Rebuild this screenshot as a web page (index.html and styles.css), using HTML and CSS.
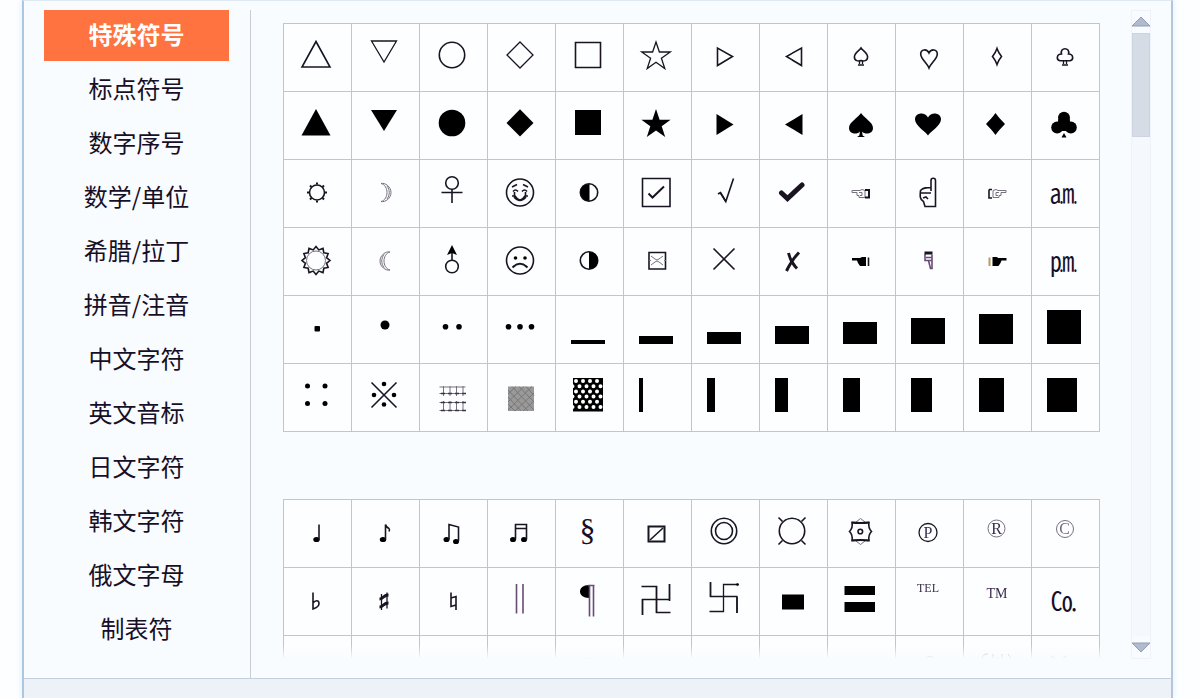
FILE: index.html
```
<!DOCTYPE html>
<html lang="zh-CN">

<head>
  <meta charset="UTF-8">
  <meta name="viewport" content="width=device-width, initial-scale=1.0">
  <title>特殊符号</title>
  <link rel="stylesheet" href="styles.css">
</head>

<body>
  <div class="window">
    <div class="panel">
      <!-- 左侧分类 -->
      <nav class="menu">
        <a class="active" href="#">特殊符号</a>
        <a href="#">标点符号</a>
        <a href="#">数字序号</a>
        <a href="#">数学/单位</a>
        <a href="#">希腊/拉丁</a>
        <a href="#">拼音/注音</a>
        <a href="#">中文字符</a>
        <a href="#">英文音标</a>
        <a href="#">日文字符</a>
        <a href="#">韩文字符</a>
        <a href="#">俄文字母</a>
        <a href="#">制表符</a>
      </nav>

      <!-- 右侧符号表 -->
      <div class="content">
        <div class="symbols">
          <div class="grid">
            <button><svg viewBox="0 0 67 67"><path d="M32 17.5L46 43H18z"/></svg></button>
            <button><svg viewBox="0 0 67 67"><path class="thin" d="M19.5 17h25L32 38z"/></svg></button>
            <button><svg viewBox="0 0 67 67"><circle cx="32" cy="31" r="12.7"/></svg></button>
            <button><svg viewBox="0 0 67 67"><path class="thin" d="M32 18l13 13-13 13-13-13z"/></svg></button>
            <button><svg viewBox="0 0 67 67"><path d="M19.5 18.5h25v25h-25z"/></svg></button>
            <button><svg viewBox="0 0 67 67"><path class="thin" d="M32 18l3.4 10h10.9l-8.9 6.3 3.4 10.2L32 38.2l-8.8 6.3 3.4-10.2-8.9-6.3h10.9z"/></svg></button>
            <button><svg viewBox="0 0 67 67"><path d="M25.5 24v17.5l15-9z"/></svg></button>
            <button><svg viewBox="0 0 67 67"><path d="M41.5 24v17.5l-15-9z"/></svg></button>
            <button><svg viewBox="0 0 67 67"><path d="M33 24c-2 3-6.600 5-6.600 9 0 4 4 4.500 6.600 3.500 2.600 1 6.600.5 6.600-3.500 0-4-4.600-6-6.600-9z"/><path class="thin" d="M31.500 37v3M34.500 37v3M30 41h6"/></svg></button>
            <button><svg viewBox="0 0 67 67"><path d="M33 44c-2-5-8.300-9-8.300-14 0-5 6.300-5.500 8.300-1 2-4.500 8.300-4 8.300 1 0 5-6.300 9-8.300 14z"/></svg></button>
            <button><svg viewBox="0 0 67 67"><path d="M33 24.500c1 3 2.500 5.500 4.500 8-2 2.500-3.500 5-4.500 8-1-3-2.500-5.500-4.500-8 2-2.500 3.500-5 4.500-8z"/></svg></button>
            <button><svg viewBox="0 0 67 67"><path d="M29.500 30c-2-7 9-7 7 0 5 0 5.500 6 1.500 6.700H28c-4-.7-3.500-6.700 1.500-6.700z"/><path class="thin" d="M31.500 37v3M34.500 37v3M30 41h6"/></svg></button>

            <button><svg viewBox="0 0 67 67"><path class="fill" d="M32 17l14.500 26.500h-29z"/></svg></button>
            <button><svg viewBox="0 0 67 67"><path class="fill" d="M19 18h26L32 39z"/></svg></button>
            <button><svg viewBox="0 0 67 67"><circle class="fill" cx="32" cy="31" r="13.3"/></svg></button>
            <button><svg viewBox="0 0 67 67"><path class="fill" d="M32 17.3L45.500 31 32 44.500 18.500 31z"/></svg></button>
            <button><svg viewBox="0 0 67 67"><path class="fill" d="M19 18h26v25H19z"/></svg></button>
            <button><svg viewBox="0 0 67 67"><path class="fill" d="M32 17l3.600 10.800h11L37.700 34.300l3.500 10.700L32 38.500 22.800 45l3.500-10.700-8.900-6.500h11z"/></svg></button>
            <button><svg viewBox="0 0 67 67"><path class="fill" d="M24.500 22v21l17-10.500z"/></svg></button>
            <button><svg viewBox="0 0 67 67"><path class="fill" d="M42.500 22v21l-17.500-10.500z"/></svg></button>
            <button><svg viewBox="0 0 67 67"><path class="fill" d="M33 21c3 5 12 9 12 15 0 6-8 7-11 3.500l.7 4 2.300 1.500h-8l2.300-1.500.7-4C29 43 21 42 21 36c0-6 9-10 12-15z"/></svg></button>
            <button><svg viewBox="0 0 67 67"><path class="fill" d="M32 43.500c-2-3.500-13-10-13-16 0-7 10-8 13-2 3-6 13-5 13 2 0 6-11 12.500-13 16z"/></svg></button>
            <button><svg viewBox="0 0 67 67"><path class="fill" d="M31.500 21c3 4 6 7.500 9.500 11-3.500 3.500-6.500 7-9.500 11-3-4-6-7.500-9.500-11 3.500-3.500 6.500-7 9.500-11z"/></svg></button>
            <button><svg viewBox="0 0 67 67"><circle class="fill" cx="32" cy="25.7" r="6"/><circle class="fill" cx="25.2" cy="35.5" r="6"/><circle class="fill" cx="38.8" cy="35.5" r="6"/><path class="fill" d="M26.500 27h11l3 12h-17zM32 41l2.500 4.500h-5z"/></svg></button>

            <button><svg viewBox="0 0 67 67"><circle cx="33" cy="32.5" r="7.5"/><path class="bold" d="M33 22.500v2M33 40.500v2M23 32.500h2M41 32.500h2M26 25.500l1.500 1.500M38.500 38l1.500 1.500M40 25.500L38.500 27M27.500 38L26 39.500"/></svg></button>
            <button><svg viewBox="0 0 67 67"><path class="grey" d="M29 23.500c4-1 10 3 10 9s-6 10-10 9c8-2 8-16 0-18z"/><path class="grey" d="M35 26c3 4 3 9 0 13"/></svg></button>
            <button><svg viewBox="0 0 67 67"><circle cx="32" cy="23" r="6.3"/><path d="M21.500 32.500h21M32 29.500V43"/></svg></button>
            <button><svg viewBox="0 0 67 67"><circle cx="32" cy="32.5" r="13.5"/><path d="M24 27l5-2.500M40 27l-5-2.500M25 31.500q2.500-3 5 0M34 31.500q2.500-3 5 0M24 36h3q5 8 10 0h3M26 37q6 7 12 0M26.500 32v4M37.500 32v4"/></svg></button>
            <button><svg viewBox="0 0 67 67"><circle cx="33" cy="32.5" r="8.7"/><path class="fill" d="M33.500 24v17c-12 0-12-17 0-17z"/></svg></button>
            <button><svg viewBox="0 0 67 67"><path d="M18.500 18.500h27.500v28h-27.500z"/><path class="bold" d="M24.500 33.500l4 4 11.500-11"/></svg></button>
            <button><svg viewBox="0 0 67 67"><path d="M26 34l2.500-1.500 5.300 9 7.700-23"/><path d="M28.500 33l5 8"/></svg></button>
            <button><svg viewBox="0 0 67 67"><path class="heavy" d="M21.500 33l6 5.500L42 25"/></svg></button>
            <button><svg viewBox="0 0 67 67"><path class="grey" d="M24 30.500h8l2-1 3 1v7h-6v-2h-2v-3h-5zM31 32.500h3v3h-2"/><path class="bold" d="M37 30h4v7.500h-4"/></svg></button>
            <button><svg viewBox="0 0 67 67"><path d="M35 31V20.500c0-3 4.500-3 4.500 0v26H29l-1.500-5c-4-2-3.500-6-3-11 3-3 6-3 10.500-3M25 33h10M27 38l3-1 2 2"/></svg></button>
            <button><svg viewBox="0 0 67 67"><path class="grey" d="M42 30.500h-8l-2-1-3 1v7h6v-2h2v-3h5zM35 32.500h-3v3h2"/><path d="M25 29.500v8.500h3M25 29.500h3"/></svg></button>
            <button class="word">㏂</button>

            <button><svg viewBox="0 0 67 67"><circle class="grey" cx="32" cy="32.5" r="9.5"/><path d="M46 32.500L42.600 35.300 44.100 39.500 39.800 40.300 39 44.600 34.800 43.100 32 46.500 29.200 43.100 25 44.600 24.200 40.300 19.900 39.500 21.400 35.300 18 32.500 21.400 29.700 19.900 25.500 24.200 24.700 25 20.400 29.200 21.900 32 18.500 34.800 21.900 39 20.400 39.800 24.700 44.100 25.500 42.600 29.700z"/></svg></button>
            <button><svg viewBox="0 0 67 67"><path class="grey" d="M38 24c-4-1-10 3-10 9s6 10 10 9c-8-2-8-16 0-18z"/><path class="grey" d="M32 26.500c-3 4-3 9 0 13"/></svg></button>
            <button><svg viewBox="0 0 67 67"><circle cx="32" cy="38.5" r="6.3"/><path d="M32 32v-8"/><path class="fill" d="M32 17l5 10-5-2-5 2z"/></svg></button>
            <button><svg viewBox="0 0 67 67"><circle cx="32" cy="32.5" r="13.5"/><circle class="fill" cx="27.5" cy="30" r="1.8"/><circle class="fill" cx="37" cy="30" r="1.8"/><path class="bold" d="M24.500 39.500q7.500-7.500 15 0"/></svg></button>
            <button><svg viewBox="0 0 67 67"><circle cx="33" cy="32.5" r="8.7"/><path class="fill" d="M33 24v17c12 0 12-17 0-17z"/></svg></button>
            <button><svg viewBox="0 0 67 67"><path d="M25 24.500h16.500v16.500H25z"/><path class="grey" d="M27 28l4 3q2 2 4 0l4-3M27 37l4-3q2-2 4 0l4 3M25 32.500h2M40 32.500h2"/></svg></button>
            <button><svg viewBox="0 0 67 67"><path d="M21.500 20.500l21 21M42.500 20.500l-21 21"/></svg></button>
            <button><svg viewBox="0 0 67 67"><path class="strong" d="M39 24.500q-7 7-12.500 18.500M28.500 25q2 9 8.500 15.500"/></svg></button>
            <button><svg viewBox="0 0 67 67"><path class="fill" d="M24 30h8l2-1h4v9h-6l-2-3-1-2.500h-5z"/><path d="M40.500 29.500v8.500"/></svg></button>
            <button><svg viewBox="0 0 67 67"><path class="plum" d="M29 26v6.500h3.500l2 8h1.500v-14M30 29.500h6M32 32.500h4"/><path class="strong" d="M28.500 25h8"/></svg></button>
            <button><svg viewBox="0 0 67 67"><path class="fill" d="M42.500 30h-8l-2-1h-4v9h6l2-3 1-2.500h5z"/><path class="gold" d="M25.500 29.500v8.500"/></svg></button>
            <button class="word">㏘</button>

            <button><svg viewBox="0 0 67 67"><rect class="fill" x="30.5" y="30" width="5.5" height="5.5" rx="1"/></svg></button>
            <button><svg viewBox="0 0 67 67"><circle class="fill" cx="33" cy="29" r="4.5"/></svg></button>
            <button><svg viewBox="0 0 67 67"><circle class="fill" cx="25.5" cy="30.7" r="2.8"/><circle class="fill" cx="39" cy="30.7" r="2.8"/></svg></button>
            <button><svg viewBox="0 0 67 67"><circle class="fill" cx="20.5" cy="30.7" r="2.8"/><circle class="fill" cx="32" cy="30.7" r="2.8"/><circle class="fill" cx="43.5" cy="30.7" r="2.8"/></svg></button>
            <button><svg viewBox="0 0 67 67"><path class="fill" d="M15 44h34v4H15z"/></svg></button>
            <button><svg viewBox="0 0 67 67"><path class="fill" d="M15 40h34v8H15z"/></svg></button>
            <button><svg viewBox="0 0 67 67"><path class="fill" d="M15 36h34v12H15z"/></svg></button>
            <button><svg viewBox="0 0 67 67"><path class="fill" d="M15 30h34v18H15z"/></svg></button>
            <button><svg viewBox="0 0 67 67"><path class="fill" d="M15 26h34v22H15z"/></svg></button>
            <button><svg viewBox="0 0 67 67"><path class="fill" d="M15 22h34v26H15z"/></svg></button>
            <button><svg viewBox="0 0 67 67"><path class="fill" d="M15 18h34v30H15z"/></svg></button>
            <button><svg viewBox="0 0 67 67"><path class="fill" d="M15 14h34v34H15z"/></svg></button>

            <button><svg viewBox="0 0 67 67"><circle class="fill" cx="23.5" cy="22" r="2.5"/><circle class="fill" cx="41" cy="22" r="2.5"/><circle class="fill" cx="23.5" cy="39.5" r="2.5"/><circle class="fill" cx="41" cy="39.5" r="2.5"/></svg></button>
            <button><svg viewBox="0 0 67 67"><path d="M19.500 18.500l25 25M44.500 18.500l-25 25"/><circle class="fill" cx="32" cy="20" r="2.3"/><circle class="fill" cx="22" cy="31" r="2.3"/><circle class="fill" cx="42" cy="31" r="2.3"/><circle class="fill" cx="32" cy="40.5" r="2.3"/></svg></button>
            <button><svg viewBox="0 0 67 67"><path class="grey" d="M19.500 23h26M19.500 29.500h26M19.500 38.500h26M19.500 46.500h26M23.500 22v10M30 22v10M36.500 22v10M43 22v10M23.500 37v10M30 37v10M36.500 37v10M43 37v10"/><path class="dash" d="M21 29.500h25M21 38.500h25M21 46.500h25"/></svg></button>
            <button><svg viewBox="0 0 67 67"><path class="shade" d="M20 22.500h26V47H20z"/><path class="mesh" d="M20 26l20 21M20 33l13 14M20 40l7 7M24 22.500L46 46M31 22.500L46 38M38 22.500l8 9M20 30l8-7.500M20 38l16-15.500M20 46l24-23.500M27 47l19-18M35 47l11-10"/></svg></button>
            <button><svg viewBox="0 0 67 67"><path class="fill" d="M17 14h30v33.500H17z"/><path class="holes" d="M20 17h28M16.500 22.300h31M20 27.500h28M16.500 32.500h31M20 37.700h28M16.500 43h31"/></svg></button>
            <button><svg viewBox="0 0 67 67"><path class="fill" d="M15 14h4v34h-4z"/></svg></button>
            <button><svg viewBox="0 0 67 67"><path class="fill" d="M15 14h8v34h-8z"/></svg></button>
            <button><svg viewBox="0 0 67 67"><path class="fill" d="M15 14h13v34H15z"/></svg></button>
            <button><svg viewBox="0 0 67 67"><path class="fill" d="M15 14h17v34H15z"/></svg></button>
            <button><svg viewBox="0 0 67 67"><path class="fill" d="M15 14h21v34H15z"/></svg></button>
            <button><svg viewBox="0 0 67 67"><path class="fill" d="M15 14h25v34H15z"/></svg></button>
            <button><svg viewBox="0 0 67 67"><path class="fill" d="M15 14h30v34H15z"/></svg></button>
          </div>

          <div class="grid">
            <button><svg viewBox="0 0 67 67"><ellipse class="fill" cx="32.5" cy="39.5" rx="3.2" ry="2.6"/><path d="M35 39.500v-15"/></svg></button>
            <button><svg viewBox="0 0 67 67"><ellipse class="fill" cx="31" cy="39.5" rx="3.2" ry="2.6"/><path d="M33.500 39.500v-15q1 3 3.500 4 1 1 0 3"/></svg></button>
            <button><svg viewBox="0 0 67 67"><ellipse class="fill" cx="26.5" cy="39.5" rx="3" ry="2.6"/><ellipse class="fill" cx="36" cy="41.5" rx="3" ry="2.6"/><path d="M29 39.500v-15l9.500 2.500v14"/></svg></button>
            <button><svg viewBox="0 0 67 67"><ellipse class="fill" cx="25" cy="39.5" rx="3" ry="2.6"/><ellipse class="fill" cx="36" cy="39.5" rx="3" ry="2.6"/><path d="M27.500 39.500v-15h11v15M27.500 28.500h11"/></svg></button>
            <button class="serif">§</button>
            <button><svg viewBox="0 0 67 67"><path class="bold" d="M24.500 26.500h16v15h-16z"/><path d="M26 40l13-12"/></svg></button>
            <button><svg viewBox="0 0 67 67"><circle cx="32" cy="31" r="12.7"/><circle cx="32" cy="31" r="8.5"/></svg></button>
            <button><svg viewBox="0 0 67 67"><circle cx="32" cy="31" r="12.7"/><path d="M18.500 17.500l4 4M45.500 17.500l-4 4M18.500 44.500l4-4M45.500 44.500l-4-4"/></svg></button>
            <button><svg viewBox="0 0 67 67"><path class="grey" d="M28 22l4.500-3.500L37 22M28 41l4.500 3.500L37 41"/><path d="M24 22.500q8.500 1 17 0-1 5.500 2.500 9-3.500 3.500-2.500 9-8.500-1-17 0 1-5.500-2.500-9 3.500-3.500 2.500-9z"/><path class="bold" d="M24 22.500q8.500 1 17 0M24 40.500q8.500-1 17 0"/><circle cx="32.3" cy="31.5" r="2.3"/></svg></button>
            <button><svg viewBox="0 0 67 67"><circle class="thin" cx="32" cy="32.5" r="9"/><text x="32" y="38">P</text></svg></button>
            <button><svg viewBox="0 0 67 67"><circle class="grey" cx="32.5" cy="28.5" r="8.5"/><text x="32.5" y="34">R</text></svg></button>
            <button><svg viewBox="0 0 67 67"><circle class="grey" cx="33" cy="29" r="8.5"/><text class="pale" x="32.5" y="34">C</text></svg></button>

            <button><svg viewBox="0 0 67 67"><path d="M29 24.500v16.500q6-2 6-5.500c0-4-4-3-6-.5"/></svg></button>
            <button><svg viewBox="0 0 67 67"><path class="thin" d="M29.500 26v16M35 24.500v16"/><path class="strong" d="M27.500 31q2 0 4-2t5-2M27.500 39q2 0 4-2t5-2"/></svg></button>
            <button><svg viewBox="0 0 67 67"><path d="M31 24.500V38.500l5-1.500M36 42V28.500l-5 1.500"/></svg></button>
            <button><svg viewBox="0 0 67 67"><path class="plum" d="M28.500 16v29.500M35 16v29.500"/></svg></button>
            <button><svg viewBox="0 0 67 67"><path class="fill" d="M33 17v13c-12 0-12-13 0-13z"/><path class="plum" d="M33.500 17v31.500M37.500 17v31.500M32 17.500h6.500"/></svg></button>
            <button><svg viewBox="0 0 67 67"><path class="thin" d="M17.500 18.500h15v26h14M18.500 47V31.500h27V16"/><path d="M18.500 47V31M45.500 16v17M32.500 18v27"/></svg></button>
            <button><svg viewBox="0 0 67 67"><path class="thin" d="M18.500 14.500v14h26.500V45M17.500 43.500h14v-27h15"/><path d="M18.500 14v15M45 29v16"/><circle class="fill" cx="45.5" cy="16.5" r="1.3"/></svg></button>
            <button><svg viewBox="0 0 67 67"><path class="fill" d="M22 26.500h22v15H22z"/></svg></button>
            <button><svg viewBox="0 0 67 67"><path class="fill" d="M16.500 18H47v9H16.500zM16.500 34H47v10H16.500z"/></svg></button>
            <button><svg viewBox="0 0 67 67"><text class="tel" x="32" y="24">TEL</text></svg></button>
            <button><svg viewBox="0 0 67 67"><text class="tm" x="33" y="30">TM</text></svg></button>
            <button class="word">㏇</button>

            <button></button>
            <button></button>
            <button></button>
            <button></button>
            <button><svg viewBox="0 0 67 67"><path class="faint" d="M29 23q4-2 8 0"/></svg></button>
            <button></button>
            <button></button>
            <button></button>
            <button></button>
            <button><svg viewBox="0 0 67 67"><path class="faint" d="M29 23q5-5 10 0"/></svg></button>
            <button><svg viewBox="0 0 67 67"><path class="faint" d="M18 23q0-5 6-5M29 18v5M38 18v5M44 18l3 5M32 23l3-2"/></svg></button>
            <button><svg viewBox="0 0 67 67"><path class="faint" d="M19 20l5 3M31 22l3-2"/></svg></button>
          </div>
        </div>

        <div class="scrollbar">
          <button class="arrow" aria-label="向上"><svg viewBox="0 0 20 10"><path d="M10 0l9 9H1z"/></svg></button>
          <div class="track">
            <div class="thumb"></div>
          </div>
          <button class="arrow" aria-label="向下"><svg viewBox="0 0 20 10"><path d="M10 10L1 1h18z"/></svg></button>
        </div>
      </div>
    </div>
    <div class="bottom"></div>
  </div>
</body>

</html>
```
FILE: styles.css
```
* {
  box-sizing: border-box;
}

body {
  margin: 0;
  padding: 0 27px 0 22px;
  background-color: #fcfeff;
  font-family: "Noto Sans CJK SC", "Noto Sans", sans-serif;
  color: #170f26;
}

.window {
  display: flex;
  flex-direction: column;
  height: 100vh;
  border-left: 2px solid #abc7e1;
  border-right: 2px solid #b4c5dd;
  border-top: 1px solid #e0eaf3;
  background-color: #f9fcff;
  box-shadow: 0 0 6px #e0edf8;
}

.panel {
  flex: 1;
  min-height: 0;
  display: flex;
  padding-top: 9px;
}

.bottom {
  height: 20px;
  border-top: 1px solid #c5cedb;
  background-color: #edf2f9;
}

/* 左侧菜单 */
.menu {
  display: flex;
  flex-direction: column;
  gap: 3px;
  width: 227px;
  padding: 0 21px 0 20px;
  border-right: 1px solid #c8ccd5;
}

.menu a {
  height: 51px;
  line-height: 48px;
  font-size: 24px;
  text-align: center;
  text-decoration: none;
  color: #170f26;
}

.menu a.active {
  background-color: #ff7340;
  color: #fff;
  font-weight: bold;
}

.content {
  flex: 1;
  display: flex;
  gap: 31px;
  padding: 0 20px 19px 32px;
}

.symbols {
  flex: 1;
  overflow: hidden;
  padding-top: 13px;
  -webkit-mask-image: linear-gradient(to top, transparent, #000 14px);
  mask-image: linear-gradient(to top, transparent, #000 14px);
}

/* 符号表格 */
.grid {
  display: grid;
  grid-template-columns: repeat(12, 1fr);
  grid-auto-rows: 68px;
  margin-bottom: 67px;
  border-top: 1px solid #bec6d2;
  border-left: 1px solid #bec6d2;
}

.grid button {
  display: flex;
  align-items: center;
  justify-content: center;
  min-width: 0;
  padding: 0;
  border: none;
  border-right: 1px solid #bec6d2;
  border-bottom: 1px solid #bec6d2;
  background-color: #fdfeff;
  color: #170f26;
  font-family: inherit;
  cursor: pointer;
}

.grid button:hover {
  background-color: #eef5fc;
}

.grid svg {
  flex: none;
  width: 67px;
  height: 67px;
  fill: none;
  stroke: #1a1422;
  stroke-width: 1.6;
}

.grid .word {
  padding: 0 4px 4px 0;
  font-size: 26px;
}

.grid .serif {
  padding: 0 4px 6px 0;
  font-family: "Liberation Serif", serif;
  font-size: 32px;
}

.grid .thin {
  stroke-width: 1.3;
}

.grid .bold {
  stroke-width: 2;
}

.grid .strong {
  stroke-width: 3;
}

.grid .heavy {
  stroke-width: 5;
  stroke-linecap: round;
}

.grid .fill {
  fill: #000;
  stroke: none;
}

.grid .grey {
  stroke: #77717f;
  stroke-width: 1;
}

.grid .plum {
  stroke: #694b76;
}

.grid .gold {
  stroke: #bd9860;
  stroke-width: 2;
}

.grid .faint {
  stroke: #999;
  stroke-width: 1;
}

.grid .dash {
  stroke: #3a3348;
  stroke-dasharray: 4 3;
}

.grid .shade {
  fill: #999;
  stroke: none;
}

.grid .mesh {
  stroke: #777;
  stroke-width: 1;
}

.grid .holes {
  stroke: #fff;
  stroke-width: 4;
  stroke-linecap: round;
  stroke-dasharray: 0 7;
}

.grid text {
  fill: #3b2b4c;
  stroke: none;
  font-family: "Liberation Serif", serif;
  font-size: 16px;
  text-anchor: middle;
}

.grid .pale {
  fill: #726a7b;
}

.grid .tel {
  font-size: 12px;
}

.grid .tm {
  font-size: 14px;
}

/* 滚动条 */
.scrollbar {
  display: flex;
  flex-direction: column;
  width: 20px;
  border: 1px solid #eef3f9;
  background-color: #f8fbff;
}

.arrow {
  display: flex;
  align-items: center;
  justify-content: center;
  height: 22px;
  padding: 0;
  border: none;
  background: none;
  cursor: pointer;
}

.arrow svg {
  flex: none;
  width: 20px;
  height: 10px;
  fill: #b0bbd0;
  stroke: #929daf;
}

.track {
  flex: 1;
  background-color: #f5f8fd;
}

.thumb {
  height: 104px;
  background-color: #d5dce5;
  border: 1px solid #ccd4df;
}
```
